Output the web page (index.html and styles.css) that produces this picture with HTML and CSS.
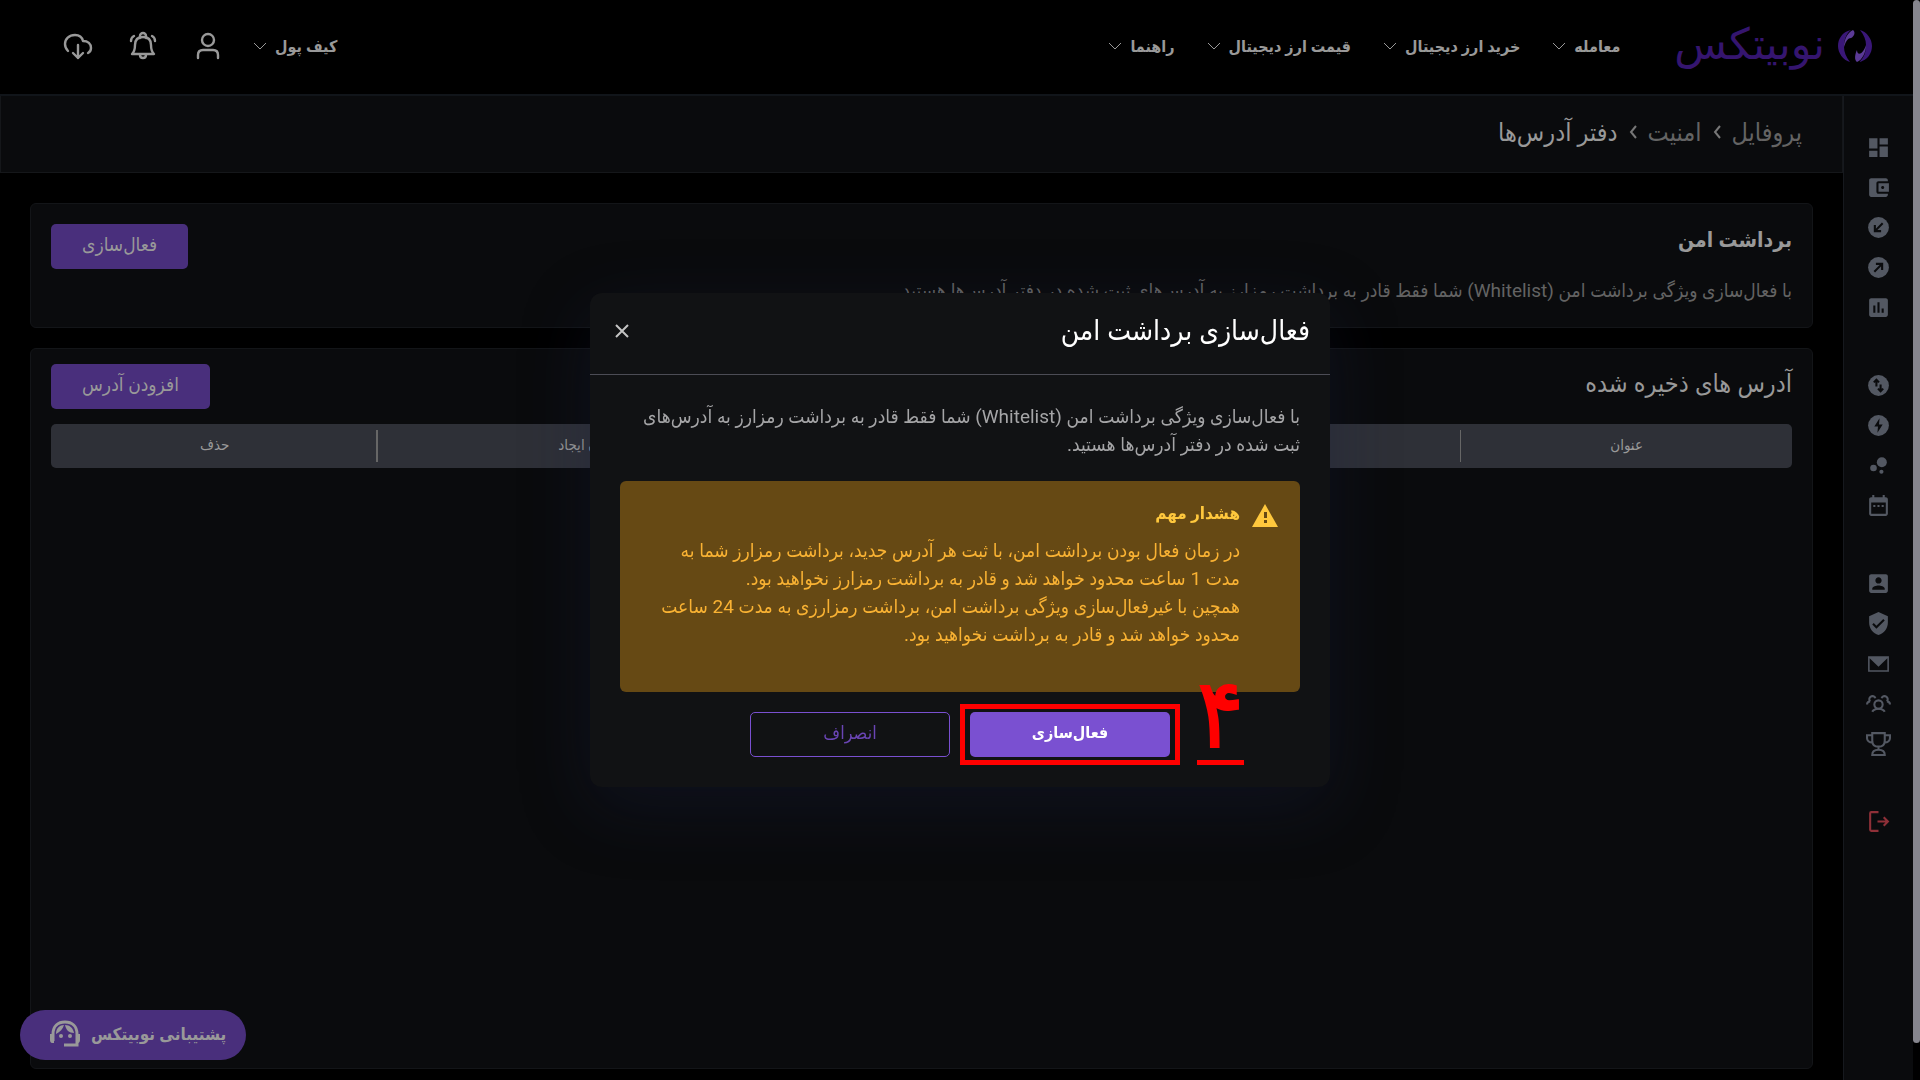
FILE: index.html
```html
<!DOCTYPE html>
<html lang="fa" dir="rtl">
<head>
  <meta charset="UTF-8">
  <title>دفتر آدرس‌ها | نوبیتکس</title>
  <link rel="stylesheet" href="styles.css">
</head>
<body>

<header class="header">
  <a class="logo" href="#">
    <svg width="36" height="34" viewBox="0 0 36 34">
      <path fill="#3a1778" d="M14 1C5 3 1 10 1 17s5 14 12 16c-4-5-6-10-6-15C7 11 9 5 14 1z"/>
      <path fill="#3a1778" d="M22 33c9-2 13-9 13-16S30 3 23 1c4 5 6 10 6 15 0 7-2 13-7 17z"/>
      <path fill="#5b3a96" d="M7 18C7 10 11 3 16 1c3 2 1 7-2 8-3 0-5 3-7 9z"/>
      <path fill="#5b3a96" d="M29 16c0 8-4 15-9 17-3-2-2-8 0-12 0 6 6 5 9-5z"/>
    </svg>
    <span class="logo-text">نوبیتکس</span>
  </a>
  <nav class="nav">
    <a href="#">معامله <svg class="chevron" viewBox="0 0 14 8"><path d="M1 1l6 6 6-6"/></svg></a>
    <a href="#">خرید ارز دیجیتال <svg class="chevron" viewBox="0 0 14 8"><path d="M1 1l6 6 6-6"/></svg></a>
    <a href="#">قیمت ارز دیجیتال <svg class="chevron" viewBox="0 0 14 8"><path d="M1 1l6 6 6-6"/></svg></a>
    <a href="#">راهنما <svg class="chevron" viewBox="0 0 14 8"><path d="M1 1l6 6 6-6"/></svg></a>
  </nav>
  <div class="tools">
    <a class="wallet" href="#">کیف پول <svg class="chevron" viewBox="0 0 14 8"><path d="M1 1l6 6 6-6"/></svg></a>
    <button class="tool" aria-label="حساب کاربری">
      <svg viewBox="0 0 30 30"><circle cx="15" cy="9" r="6"/><path d="M5 27v-3c0-3 2-5 5-5h10c3 0 5 2 5 5v3"/></svg>
    </button>
    <button class="tool" aria-label="اعلان‌ها">
      <svg viewBox="0 0 30 30"><path d="M12 7V5a3 3 0 0 1 6 0v2M4 23c2-2 3-5 3-9 0-5 3-8 8-8s8 3 8 8c0 4 1 7 3 9zM12 24c0 2 1 3 3 3s3-1 3-3M3 10c0-2 1-4 3-5M27 10c0-2-1-4-3-5"/></svg>
    </button>
    <button class="tool" aria-label="دانلود">
      <svg viewBox="0 0 30 30"><path d="M5 20c-2-2-3-4-3-7 0-5 4-9 10-9 4 0 7 2 8 6 5 0 8 3 8 7 0 2-1 4-3 5M15 14v13M10 22l5 5 5-5"/></svg>
    </button>
  </div>
</header>

<div class="page">
  <aside class="sidebar">
    <div class="side-group">
      <a href="#" aria-label="داشبورد"><svg viewBox="0 0 24 24"><path d="M3 13h8V3H3v10zm0 8h8v-6H3v6zm10 0h8V11h-8v10zm0-18v6h8V3h-8z"/></svg></a>
      <a href="#" aria-label="کیف پول"><svg viewBox="0 0 24 24"><path d="M21 18v1c0 1.100-.9 2-2 2H5c-1.110 0-2-.9-2-2V5c0-1.100.89-2 2-2h14c1.100 0 2 .9 2 2v1h-9c-1.110 0-2 .9-2 2v8c0 1.100.89 2 2 2h9zm-9-2h10V8H12v8zm4-2.500c-.83 0-1.500-.67-1.500-1.500s.67-1.500 1.500-1.500 1.500.67 1.500 1.500-.67 1.500-1.500 1.500z"/></svg></a>
      <a href="#" aria-label="واریز"><svg viewBox="0 0 24 24"><circle cx="12" cy="12" r="10"/><path class="cut" d="M16 8l-7 7M8.500 9.500v6h6"/></svg></a>
      <a href="#" aria-label="برداشت"><svg viewBox="0 0 24 24"><circle cx="12" cy="12" r="10"/><path class="cut" d="M8 16l7-7M15.500 14.500v-6h-6"/></svg></a>
      <a href="#" aria-label="گزارش"><svg viewBox="0 0 24 24"><path d="M19 3H5c-1.100 0-2 .9-2 2v14c0 1.100.9 2 2 2h14c1.100 0 2-.9 2-2V5c0-1.100-.9-2-2-2zM9 17H7v-7h2v7zm4 0h-2V7h2v10zm4 0h-2v-4h2v4z"/></svg></a>
    </div>
    <div class="side-group">
      <a href="#" aria-label="تبدیل"><svg viewBox="0 0 24 24"><circle cx="12" cy="12" r="10"/><path class="cut" d="M10 13V7M7.500 9L10 6.500 12.500 9M14 11v6M11.500 15l2.500 2.500 2.500-2.500"/></svg></a>
      <a href="#" aria-label="معامله سریع"><svg viewBox="0 0 24 24"><circle cx="12" cy="12" r="10"/><path class="hole" d="M13 5l-5 8h3.500l-.5 6 5-8h-3.500z"/></svg></a>
      <a href="#" aria-label="استیکینگ"><svg viewBox="0 0 24 24"><circle cx="7.200" cy="14.400" r="3.200"/><circle cx="14.800" cy="18" r="2"/><circle cx="15.200" cy="8.800" r="4.800"/></svg></a>
      <a href="#" aria-label="تقویم"><svg viewBox="0 0 24 24"><path d="M19 4h-1V2h-2v2H8V2H6v2H5c-1.100 0-2 .9-2 2v14c0 1.100.9 2 2 2h14c1.100 0 2-.9 2-2V6c0-1.100-.9-2-2-2zm0 16H5V9h14v11zM7 11.500h2v2H7zM11 11.500h2v2h-2zM15 11.500h2v2h-2z"/></svg></a>
    </div>
    <div class="side-group">
      <a href="#" aria-label="پروفایل"><svg viewBox="0 0 24 24"><path d="M3 5v14c0 1.100.89 2 2 2h14c1.100 0 2-.9 2-2V5c0-1.100-.9-2-2-2H5c-1.110 0-2 .9-2 2zm12 4c0 1.660-1.340 3-3 3s-3-1.340-3-3 1.340-3 3-3 3 1.340 3 3zm-9 8c0-2 4-3.100 6-3.100s6 1.100 6 3.100v1H6v-1z"/></svg></a>
      <a href="#" aria-label="امنیت"><svg viewBox="0 0 24 24"><path d="M12 1L3 5v6c0 5.550 3.840 10.740 9 12 5.160-1.260 9-6.450 9-12V5l-9-4zm-2 16l-4-4 1.410-1.410L10 14.170l6.590-6.590L18 9l-8 8z"/></svg></a>
      <a href="#" aria-label="پیام‌ها"><svg viewBox="0 0 24 24"><path d="M2 5h20v15H2zM3.500 7v11.500h17V7L12 15z" fill-rule="evenodd"/></svg></a>
      <a href="#" aria-label="معرفی دوستان"><svg class="line" viewBox="0 0 24 24"><circle cx="12" cy="13" r="4"/><path d="M6 20c1-2 3-3 6-3s5 1 6 3M1 13c0-2 1-3 3-3M23 13c0-2-1-3-3-3M4 10a3 3 0 1 1 5-3M20 10a3 3 0 1 0-5-3"/></svg></a>
      <a href="#" aria-label="جوایز"><svg class="line" viewBox="0 0 24 24"><path d="M6 2h12v7c0 4-2 6-6 6s-6-2-6-6zM6 4H1v3c0 2 2 4 5 4M18 4h5v3c0 2-2 4-5 4M12 15v3M6 23c0-3 2-5 6-5s6 2 6 5z"/></svg></a>
    </div>
    <div class="side-group">
      <a href="#" aria-label="خروج"><svg class="line exit" viewBox="0 0 24 24"><path d="M12 3H5c-1 0-1 0-1 1v16c0 1 0 1 1 1h7M11 12h10M17 8l4 4-4 4"/></svg></a>
    </div>
  </aside>

  <div class="content">
    <nav class="breadcrumb">
      <a href="#">پروفایل</a>
      <svg viewBox="0 0 8 14"><path d="M7 1L2 7l5 6"/></svg>
      <a href="#">امنیت</a>
      <svg viewBox="0 0 8 14"><path d="M7 1L2 7l5 6"/></svg>
      <span>دفتر آدرس‌ها</span>
    </nav>

    <main class="main">
      <section class="card withdraw">
        <div>
          <h2>برداشت امن</h2>
          <p>با فعال‌سازی ویژگی برداشت امن (Whitelist) شما فقط قادر به برداشت رمزارز به آدرس‌های ثبت شده در دفتر آدرس‌ها هستید.</p>
        </div>
        <button class="btn">فعال‌سازی</button>
      </section>

      <section class="card addresses">
        <div class="card-head">
          <h3>آدرس های ذخیره شده</h3>
          <button class="btn">افزودن آدرس</button>
        </div>
        <table class="table">
          <thead>
            <tr>
              <th class="col-title">عنوان</th>
              <th class="col-address" aria-label="آدرس"></th>
              <th class="col-date">زمان ایجاد</th>
              <th class="col-delete">حذف</th>
            </tr>
          </thead>
        </table>
      </section>
    </main>
  </div>
</div>

<button class="support">
  پشتیبانی نوبیتکس
  <svg viewBox="0 0 32 30">
    <path class="head" d="M4 22V15C4 7 9 3 16 3s12 4 12 12v11H15"/>
    <path d="M1 15h4v9H3c-1 0-2-1-2-3zM31 15h-4v9h2c1 0 2-1 2-3z"/>
    <path d="M7 15C7 9 11 6 15 6c-1 4-4 7-8 9zM16 6c5 0 8 3 9 8-5 0-8-3-9-8z"/>
    <circle cx="12" cy="17" r="2"/><circle cx="21" cy="17" r="2"/>
  </svg>
</button>

<div class="overlay">
  <div class="modal" role="dialog" aria-labelledby="modalTitle">
    <div class="modal-head">
      <h2 id="modalTitle">فعال‌سازی برداشت امن</h2>
      <button class="close" aria-label="بستن"><svg viewBox="0 0 16 16"><path d="M2 2l12 12M14 2L2 14"/></svg></button>
    </div>
    <div class="modal-body">
      <p>با فعال‌سازی ویژگی برداشت امن (Whitelist) شما فقط قادر به برداشت رمزارز به آدرس‌های<br>ثبت شده در دفتر آدرس‌ها هستید.</p>
      <div class="warning">
        <svg viewBox="0 0 26 24"><path fill="#ffc83d" d="M13 0l13 23H0z"/><path fill="#664914" d="M12 8h3v6h-3zM12 16h3v3h-3z"/></svg>
        <div>
          <h4>هشدار مهم</h4>
          <p>در زمان فعال بودن برداشت امن، با ثبت هر آدرس جدید، برداشت رمزارز شما به<br>مدت 1 ساعت محدود خواهد شد و قادر به برداشت رمزارز نخواهید بود.<br>همچین با غیرفعال‌سازی ویژگی برداشت امن، برداشت رمزارزی به مدت 24 ساعت<br>محدود خواهد شد و قادر به برداشت نخواهید بود.</p>
        </div>
      </div>
      <div class="actions">
        <div class="marked">
          <button class="btn-primary">فعال‌سازی</button>
          <span class="step">۴</span>
        </div>
        <button class="btn-outline">انصراف</button>
      </div>
    </div>
  </div>
</div>

<div class="scrollbar"></div>

</body>
</html>
```
FILE: styles.css
```css
* {
  box-sizing: border-box;
}
body {
  margin: 0;
  padding-right: 7px;
  min-height: 100vh;
  display: flex;
  flex-direction: column;
  background: #000;
  color: #999;
  font-family: Roboto, "DejaVu Sans Condensed", "DejaVu Sans", sans-serif;
  font-size: 19px;
}
h2, h3, h4, p {
  margin: 0;
}
a {
  color: inherit;
  text-decoration: none;
}
button {
  font-family: inherit;
  cursor: pointer;
}
svg {
  display: block;
  flex: none;
}

/* header */
.header {
  height: 96px;
  padding: 0 40px 2px 63px;
  display: flex;
  align-items: center;
  border-bottom: 2px solid #11151a;
}
.logo {
  display: flex;
  align-items: center;
  gap: 12px;
  color: #35156f;
}
.logo-text {
  font-family: "DejaVu Sans", sans-serif;
  font-size: 43px;
  line-height: 48px;
  padding-bottom: 4px;
}
.nav {
  display: flex;
  gap: 32px;
  margin-right: 54px;
}
.nav a, .wallet {
  display: flex;
  align-items: center;
  gap: 8px;
  font-size: 16px;
  font-weight: bold;
}
.chevron {
  width: 14px;
  height: 8px;
  fill: none;
  stroke: #999;
}
.tools {
  margin-right: auto;
  display: flex;
  align-items: center;
}
.wallet {
  margin-left: 30px;
}
.tool {
  padding: 0;
  border: 0;
  background: none;
}
.tool + .tool {
  margin-right: 35px;
}
.tool svg {
  width: 30px;
  height: 30px;
  fill: none;
  stroke: #999;
  stroke-width: 2.4;
  stroke-linecap: round;
  stroke-linejoin: round;
}

/* sidebar */
.page {
  flex: 1;
  display: flex;
}
.sidebar {
  width: 70px;
  padding-top: 31px;
  display: flex;
  flex-direction: column;
  gap: 38px;
  background: #0a0b0d;
  border-left: 1px solid #16191e;
}
.side-group a {
  height: 40px;
  display: flex;
  align-items: center;
  justify-content: center;
}
.side-group svg {
  width: 25px;
  height: 25px;
  fill: #535862;
}
.side-group .line {
  fill: none;
  stroke: #535862;
  stroke-width: 2;
}
.side-group .exit {
  stroke: #8f3038;
}
.cut {
  fill: none;
  stroke: #0a0b0d;
  stroke-width: 2;
}
.side-group .hole {
  fill: #0a0b0d;
}

/* content */
.content {
  flex: 1;
  display: flex;
  flex-direction: column;
}
.breadcrumb {
  height: 77px;
  padding: 0 40px 4px;
  display: flex;
  align-items: center;
  gap: 11px;
  background: #0a0b0d;
  border: 1px solid #15171a;
  border-top: 0;
  font-size: 25px;
  color: #646464;
}
.breadcrumb span {
  color: #999;
}
.breadcrumb svg {
  width: 8px;
  height: 14px;
  fill: none;
  stroke: #777;
  stroke-width: 2;
}
.main {
  flex: 1;
  padding: 30px 30px 11px;
  display: flex;
  flex-direction: column;
  gap: 20px;
}
.card {
  padding: 20px;
  background: #0a0b0d;
  border: 1px solid #131518;
  border-radius: 6px;
}
.withdraw {
  display: flex;
  justify-content: space-between;
  align-items: flex-start;
  min-height: 125px;
}
.withdraw h2 {
  font-size: 21px;
  line-height: 32px;
}
.withdraw p {
  margin-top: 21px;
  line-height: 28px;
  color: #636363;
}
.btn {
  height: 45px;
  padding: 0 31px 4px;
  border: 0;
  border-radius: 5px;
  background: #492f7c;
  color: #999;
  font-size: 19px;
}
.addresses {
  flex: 1;
  padding-top: 15px;
}
.card-head {
  display: flex;
  justify-content: space-between;
  align-items: flex-start;
  margin-bottom: 15px;
}
.card-head h3 {
  font-size: 25px;
  font-weight: normal;
  line-height: 40px;
}
.table {
  width: 100%;
  border-collapse: collapse;
  table-layout: fixed;
}
.table th {
  position: relative;
  height: 44px;
  padding: 0 0 2px;
  background: #2e3037;
  font-size: 15px;
  font-weight: normal;
}
.table th:first-child {
  border-radius: 0 5px 5px 0;
}
.table th:last-child {
  border-radius: 5px 0 0 5px;
}
.table th + th::before {
  content: "";
  position: absolute;
  top: 6px;
  right: 0;
  width: 1px;
  height: 32px;
  background: #666;
}
.table .col-delete::before {
  width: 2px;
}
.col-title {
  width: 19%;
}
.col-delete {
  width: 18.8%;
}
.col-date {
  width: 24%;
}

/* support button */
.support {
  position: fixed;
  left: 20px;
  bottom: 20px;
  height: 50px;
  padding: 0 20px 3px 29px;
  display: flex;
  align-items: center;
  gap: 10px;
  border: 0;
  border-radius: 25px;
  background: #492f7c;
  color: #999;
  font-size: 17px;
  font-weight: bold;
}
.support svg {
  width: 32px;
  height: 30px;
  fill: #999;
}
.support .head {
  fill: none;
  stroke: #999;
  stroke-width: 3;
}

/* modal */
.overlay {
  position: fixed;
  inset: 0;
  display: flex;
  align-items: center;
  justify-content: center;
}
.modal {
  width: 740px;
  background: #111214;
  border-radius: 12px;
  box-shadow: 0 20px 70px rgba(28, 32, 68, 0.3);
}
.modal-head {
  height: 82px;
  padding: 0 20px 6px 24px;
  display: flex;
  align-items: center;
  justify-content: space-between;
  border-bottom: 1px solid #4c4c55;
}
.modal-head h2 {
  font-size: 28px;
  font-weight: normal;
  color: #fff;
}
.close {
  padding: 0;
  border: 0;
  background: none;
}
.close svg {
  width: 16px;
  height: 16px;
  fill: none;
  stroke: #c4c4c4;
  stroke-width: 2;
}
.modal-body {
  padding: 28px 30px 30px;
  line-height: 28px;
  color: #a5a5a7;
}
.warning {
  min-height: 211px;
  margin-top: 22px;
  padding: 18px 22px;
  display: flex;
  gap: 12px;
  background: #664914;
  border-radius: 6px;
  color: #f9b233;
}
.warning svg {
  width: 26px;
  height: 24px;
  margin-top: 5px;
}
.warning h4 {
  margin-bottom: 10px;
  font-size: 17px;
  color: #ffc83d;
}
.actions {
  margin-top: 20px;
  display: flex;
  justify-content: center;
  gap: 20px;
}
.actions button {
  width: 200px;
  height: 45px;
  padding: 0 0 4px;
  border-radius: 5px;
  font-size: 16px;
}
.marked {
  position: relative;
  height: 45px;
}
.marked::before {
  content: "";
  position: absolute;
  inset: -8px -10px;
  border: 5px solid #f00;
}
.actions .btn-primary {
  position: relative;
  border: 0;
  background: #7a50d1;
  color: #fff;
  font-weight: bold;
}
.actions .btn-outline {
  border: 1px solid #7a50d1;
  background: none;
  color: #6a45b5;
  font-size: 18px;
}
.step {
  position: absolute;
  top: -44px;
  left: 227px;
  width: 47px;
  height: 97px;
  border-bottom: 5px solid #f00;
  color: #f00;
  font-size: 96px;
  line-height: 92px;
  text-align: center;
  -webkit-text-stroke: 2px #f00;
}

.scrollbar {
  position: fixed;
  top: 0;
  right: 0;
  width: 7px;
  height: 1043px;
  background: #86868e;
  border-radius: 4px;
}
```
